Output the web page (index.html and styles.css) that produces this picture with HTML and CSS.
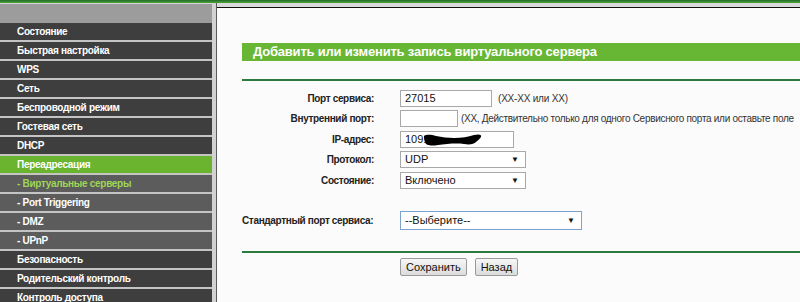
FILE: index.html
```html
<!DOCTYPE html>
<html lang="ru">
<head>
<meta charset="utf-8">
<title>Виртуальные серверы</title>
<link rel="stylesheet" href="styles.css">
</head>
<body>
<div class="topbar"></div>
<div class="layout">
  <nav class="sidebar">
    <div class="side-head"></div>
    <ul class="menu">
      <li class="item">Состояние</li>
      <li class="item">Быстрая настройка</li>
      <li class="item">WPS</li>
      <li class="item">Сеть</li>
      <li class="item">Беспроводной режим</li>
      <li class="item">Гостевая сеть</li>
      <li class="item">DHCP</li>
      <li class="item active">Переадресация</li>
      <li class="item sub current">- Виртуальные серверы</li>
      <li class="item sub">- Port Triggering</li>
      <li class="item sub">- DMZ</li>
      <li class="item sub">- UPnP</li>
      <li class="item">Безопасность</li>
      <li class="item">Родительский контроль</li>
      <li class="item">Контроль доступа</li>
    </ul>
  </nav>
  <div class="divider"></div>
  <main class="content">
    <div class="panel">
      <div class="title">Добавить или изменить запись виртуального сервера</div>
      <div class="rule"></div>
      <div class="form">
        <div class="row">
          <div class="label">Порт сервиса:</div>
          <div class="field"><span class="input w92">27015</span><span class="hint h1">(XX-XX или XX)</span></div>
        </div>
        <div class="row">
          <div class="label">Внутренний порт:</div>
          <div class="field"><span class="input w58"></span><span class="hint h2">(XX, Действительно только для одного Сервисного порта или оставьте поле</span></div>
        </div>
        <div class="row">
          <div class="label">IP-адрес:</div>
          <div class="field"><span class="input w114 ip">109.<svg class="redact" width="58" height="12" viewBox="0 0 58 12"><path d="M0 2 C3 0 8 1 12 2 C18 3 24 4 30 4 C38 4 44 3 50 1 C54 0 58 0 57 3 C56 5 54 6 52 8 C50 10 46 11 40 10 C32 9 22 10 14 11 C8 12 2 12 1 8 C0 6 0 4 0 2 Z"/></svg></span></div>
        </div>
        <div class="row">
          <div class="label">Протокол:</div>
          <div class="field"><span class="select w126">UDP<span class="arrow">▼</span></span></div>
        </div>
        <div class="row">
          <div class="label">Состояние:</div>
          <div class="field"><span class="select w126">Включено<span class="arrow">▼</span></span></div>
        </div>
        <div class="row std">
          <div class="label left">Стандартный порт сервиса:</div>
          <div class="field"><span class="select w182 focus">--Выберите--<span class="arrow">▼</span></span></div>
        </div>
      </div>
      <div class="rule rule2"></div>
      <div class="buttons">
        <button class="btn" type="button">Сохранить</button>
        <button class="btn" type="button">Назад</button>
      </div>
    </div>
  </main>
</div>
</body>
</html>
```
FILE: styles.css
```css
html, body {
  margin: 0;
  padding: 0;
  height: 302px;
  overflow: hidden;
  background: #fbfbfb;
  font-family: "Liberation Sans", Arial, sans-serif;
}
.topbar {
  height: 3px;
  background: linear-gradient(#1f6a2a, #4ea634);
}
.layout {
  display: flex;
  height: 299px;
}
.sidebar {
  width: 212px;
  flex: none;
  background: #c4c4c4;
}
.side-head {
  height: 20px;
  border-top: 1px solid #d6d6d6;
  background: #9c9c9c;
  box-sizing: border-box;
}
.menu {
  list-style: none;
  margin: 0;
  padding: 0;
}
.item {
  height: 17px;
  line-height: 17px;
  margin-bottom: 2px;
  padding-left: 17px;
  background: #3e3e3e;
  color: #fff;
  font-weight: bold;
  font-size: 10px;
  letter-spacing: -0.3px;
  white-space: nowrap;
}
.item.sub {
  background: #5c5c5c;
}
.item.active {
  background: #6ab42f;
}
.item.current {
  color: #9fd654;
}
.divider {
  width: 5px;
  flex: none;
  background: #d2d2d2;
  border-right: 1px solid #5a5a5a;
  box-sizing: border-box;
}
.content {
  flex: 1;
  min-width: 0;
  border-top: 4px solid #dadada;
  background: #fbfbfb;
  box-shadow: inset 0 1px 0 #111;
  overflow: hidden;
}
.panel {
  margin-left: 25px;
  padding-top: 36px;
  width: 700px;
}
.title {
  height: 18px;
  line-height: 18px;
  background: #67b734;
  color: #fff;
  font-weight: bold;
  font-size: 13px;
  letter-spacing: -0.2px;
  padding-left: 11px;
  white-space: nowrap;
}
.rule {
  height: 2px;
  margin-top: 18px;
  background: #2c7a3e;
}
.form {
  padding-top: 7px;
}
.row {
  display: flex;
  align-items: center;
  height: 20.5px;
}
.label {
  width: 132px;
  text-align: right;
  font-weight: bold;
  font-size: 10px;
  letter-spacing: -0.35px;
  color: #222;
  white-space: nowrap;
}
.label.left {
  text-align: left;
}
.field {
  margin-left: 26px;
  display: flex;
  align-items: center;
  white-space: nowrap;
}
.row.std {
  margin-top: 20px;
}
.input, .select {
  box-sizing: border-box;
  height: 17px;
  line-height: 15px;
  border: 1px solid #a9a9a9;
  background: #fff;
  padding-left: 4px;
  font-size: 11px;
  color: #111;
  position: relative;
}
.select {
  display: flex;
  justify-content: space-between;
  padding-right: 6px;
}
.select.focus {
  height: 19px;
  line-height: 17px;
  border-color: #7da2ce;
}
.arrow {
  font-size: 8px;
}
.w92 { width: 92px; }
.w58 { width: 58px; }
.w114 { width: 114px; }
.w126 { width: 126px; }
.w182 { width: 182px; }
.hint {
  font-size: 10px;
  letter-spacing: -0.2px;
  color: #333;
  margin-left: 4px;
}
.hint.h1 {
  margin-left: 6px;
}
.hint.h2 {
  letter-spacing: -0.3px;
  margin-left: 3px;
}
.ip .redact {
  position: absolute;
  left: 23px;
  top: 2px;
}
.rule2 {
  margin-top: 20px;
}
.buttons {
  padding-left: 158px;
  padding-top: 5px;
  display: flex;
  gap: 8px;
}
.btn {
  height: 18px;
  padding: 0 5px;
  font-family: "Liberation Sans", Arial, sans-serif;
  font-size: 11px;
  color: #111;
  background: linear-gradient(#f6f6f6, #dcdcdc);
  border: 1px solid #9a9a9a;
  border-radius: 2px;
}
```
